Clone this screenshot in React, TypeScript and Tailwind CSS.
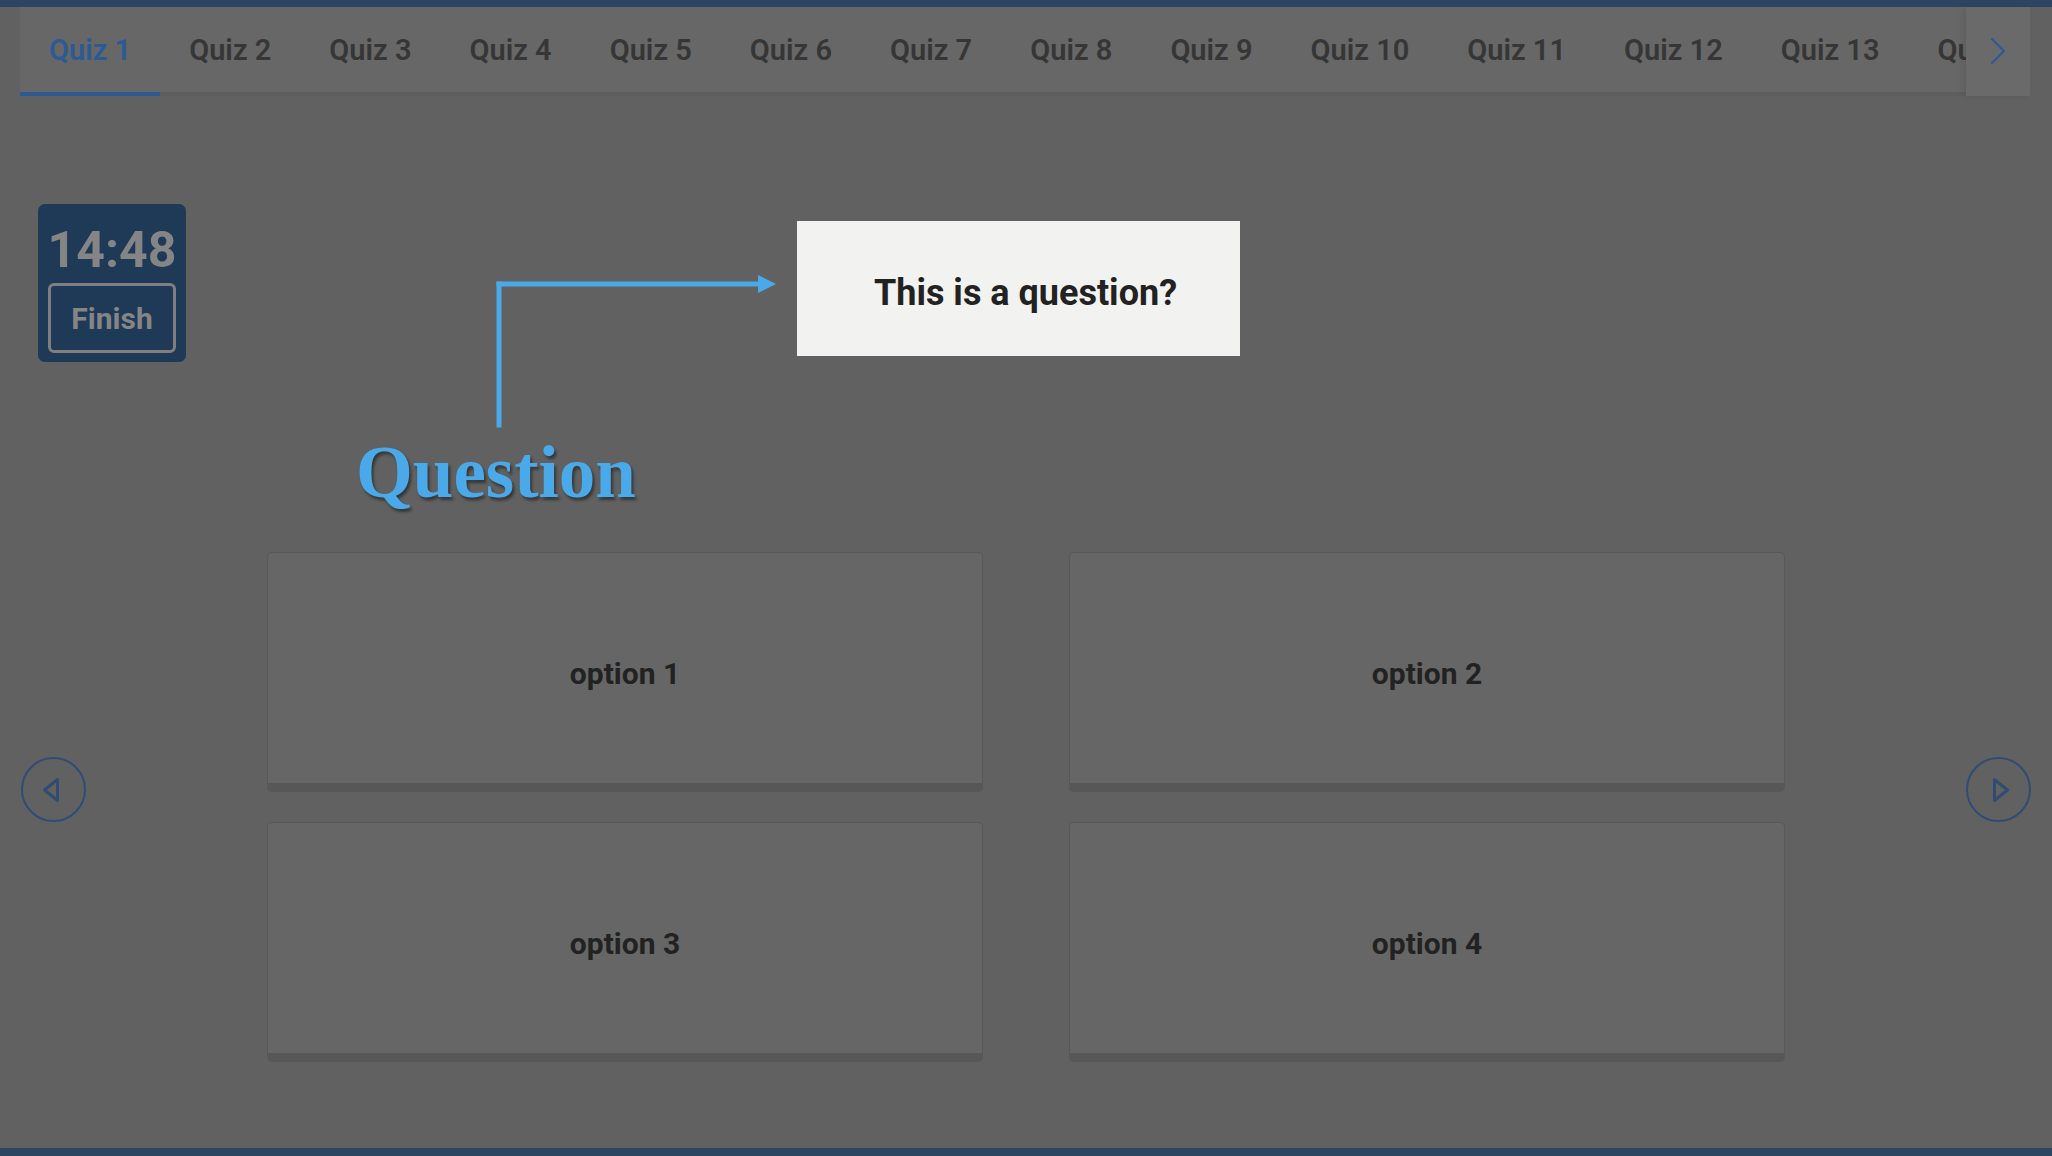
import React from 'react'

const TABS = Array.from({ length: 14 }, (_, i) => `Quiz ${i + 1}`)

function NavButton({ dir }: { dir: 'left' | 'right' }) {
  return (
    <button className="flex h-[65px] w-[65px] items-center justify-center rounded-full border-2 border-[#2f4d74]">
      <svg
        width="16"
        height="24"
        viewBox="0 0 16 24"
        className={dir === 'left' ? 'mr-[5px]' : 'ml-[5px]'}
        fill="none"
        stroke="#2f4d74"
        strokeWidth="3"
        strokeLinejoin="round"
      >
        {dir === 'left' ? (
          <polygon points="14.5,1.5 1.5,12 14.5,22.5" />
        ) : (
          <polygon points="1.5,1.5 14.5,12 1.5,22.5" />
        )}
      </svg>
    </button>
  )
}

export default function App() {
  return (
    <div className="relative flex h-[1156px] w-[2052px] flex-col overflow-hidden bg-[#616161] font-['Roboto','Liberation_Sans',sans-serif]">
      {/* top bar */}
      <div className="h-[7px] bg-[#2c4661]" />

      {/* tabs */}
      <div className="ml-[20px] mr-[22px] flex h-[89px] bg-[#676767]">
        <div className="flex flex-1 overflow-hidden">
          {TABS.map((t, i) => (
            <div
              key={t}
              className={`flex h-[89px] shrink-0 items-center whitespace-nowrap border-b-4 px-[29px] pt-[2px] text-[29px] font-semibold ${
                i === 0 ? 'border-[#2c5a93] text-[#2c5a93]' : 'border-[#5e5e5e] text-[#363636]'
              }`}
            >
              {t}
            </div>
          ))}
        </div>
        <button className="flex h-full w-[64px] shrink-0 items-center justify-center bg-[#6a6a6a] pb-[2px] shadow-[-3px_0_6px_rgba(0,0,0,0.08)]">
          <svg width="17" height="28" viewBox="0 0 17 28" fill="none" stroke="#2c5a93" strokeWidth="2.4" strokeLinecap="round" strokeLinejoin="round">
            <polyline points="2,2 14,14 2,26" />
          </svg>
        </button>
      </div>

      {/* main */}
      <div className="flex flex-1">
        <div className="flex w-[267px] shrink-0 flex-col">
          <div className="ml-[38px] mt-[108px] flex w-[148px] flex-col items-center rounded-[7px] bg-[#1f3a57] px-[10px] pb-[9px] pt-[21px]">
            <div className="text-[50px] font-bold leading-none text-[#858585]">14:48</div>
            <button className="mt-[8px] flex h-[70px] w-[128px] items-center justify-center rounded-[6px] border-[3px] border-[#7f7f7f] text-[30px] font-bold text-[#858585]">
              Finish
            </button>
          </div>
          <div className="ml-[21px] mt-[395px]">
            <NavButton dir="left" />
          </div>
        </div>

        <div className="w-[1518px] shrink-0 pt-[125px]">
          <div className="ml-[530px] flex h-[135px] w-[443px] items-center justify-center bg-[#f2f2f0] pl-[14px] pt-[8px]">
            <span className="text-[36px] font-bold text-[#222]">This is a question?</span>
          </div>

          <div className="mt-[196px] grid grid-cols-[716px_716px] grid-rows-[240px_240px] gap-x-[86px] gap-y-[30px]">
            {['option 1', 'option 2', 'option 3', 'option 4'].map((o) => (
              <button
                key={o}
                className="flex items-center justify-center rounded-[5px] border border-b-[9px] border-[#585858] border-b-[#575757] bg-[#666666] pt-[10px] text-[30px] font-bold text-[#222]"
              >
                {o}
              </button>
            ))}
          </div>
        </div>

        <div className="flex-1">
          <div className="ml-[181px] mt-[661px]">
            <NavButton dir="right" />
          </div>
        </div>
      </div>

      {/* bottom bar */}
      <div className="h-[8px] bg-[#2c4661]" />

      {/* tour pointer */}
      <svg className="absolute left-[496px] top-[275px]" width="282" height="154" viewBox="0 0 282 154" fill="#4aa9e8">
        <rect x="0.5" y="6.5" width="5" height="146" />
        <rect x="0.5" y="6.5" width="264" height="5" />
        <polygon points="262,0 280,9 262,18" />
      </svg>
      <div className="absolute left-[356px] top-[436px] font-['Liberation_Serif','DejaVu_Serif',serif] text-[73px] font-bold leading-none text-[#4aa9e8] [text-shadow:2px_3px_3px_rgba(0,0,0,0.45)]">
        Question
      </div>
    </div>
  )
}
